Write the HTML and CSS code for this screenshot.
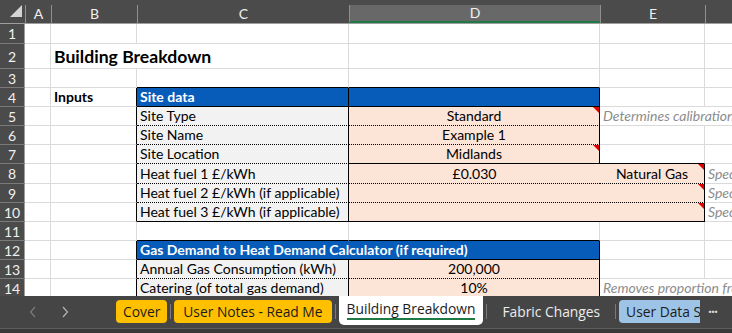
FILE: index.html
```html
<!DOCTYPE html>
<html lang="en">
<head>
    <meta charset="UTF-8">
    <meta name="viewport" content="width=device-width, initial-scale=1.0">
    <title>Building Breakdown</title>
    <link rel="stylesheet" href="styles.css">
</head>
<body>

    <div class="colhead">
        <div class="corner">
            <svg width="25" height="18" viewBox="0 0 25 18"><polygon points="22,4 22,16 10,16" fill="#d4d4d4"/></svg>
        </div>
        <div class="ch">A</div>
        <div class="ch">B</div>
        <div class="ch">C</div>
        <div class="ch sel">D</div>
        <div class="ch">E</div>
        <div class="ch"></div>
    </div>

    <div class="sheet">
        <!-- row 1 -->
        <div class="rh">1</div><div class="c"></div><div class="c"></div><div class="c"></div><div class="c"></div><div class="c"></div><div class="c"></div>
        <!-- row 2 -->
        <div class="rh">2</div><div class="c"></div><div class="c nr title">Building Breakdown</div><div class="c"></div><div class="c"></div><div class="c"></div><div class="c"></div>
        <!-- row 3 -->
        <div class="rh">3</div><div class="c"></div><div class="c"></div><div class="c bb"></div><div class="c bb"></div><div class="c"></div><div class="c"></div>
        <!-- row 4 -->
        <div class="rh">4</div><div class="c"></div><div class="c br bold">Inputs</div><div class="c hd br bb">Site data</div><div class="c hd br bb"></div><div class="c"></div><div class="c"></div>
        <!-- row 5 -->
        <div class="rh">5</div><div class="c"></div><div class="c br"></div><div class="c lbl">Site Type</div><div class="c val br note">Standard</div><div class="c nr hint">Determines calibration of the model</div><div class="c"></div>
        <!-- row 6 -->
        <div class="rh">6</div><div class="c"></div><div class="c br"></div><div class="c lbl">Site Name</div><div class="c val br">Example 1</div><div class="c"></div><div class="c"></div>
        <!-- row 7 -->
        <div class="rh">7</div><div class="c"></div><div class="c br"></div><div class="c lbl">Site Location</div><div class="c val br bb note">Midlands</div><div class="c bb"></div><div class="c"></div>
        <!-- row 8 -->
        <div class="rh">8</div><div class="c"></div><div class="c br"></div><div class="c lbl">Heat fuel 1 £/kWh</div><div class="c val nr">£0.030</div><div class="c val br note">Natural Gas</div><div class="c nr hint">Specify fuel</div>
        <!-- row 9 -->
        <div class="rh">9</div><div class="c"></div><div class="c br"></div><div class="c lbl">Heat fuel 2 £/kWh (if applicable)</div><div class="c val nr"></div><div class="c val br note"></div><div class="c nr hint">Specify fuel</div>
        <!-- row 10 -->
        <div class="rh">10</div><div class="c"></div><div class="c br"></div><div class="c lbl bb">Heat fuel 3 £/kWh (if applicable)</div><div class="c val nr bb"></div><div class="c val br bb note"></div><div class="c nr hint">Specify fuel</div>
        <!-- row 11 -->
        <div class="rh">11</div><div class="c"></div><div class="c"></div><div class="c bb"></div><div class="c bb"></div><div class="c"></div><div class="c"></div>
        <!-- row 12 -->
        <div class="rh">12</div><div class="c"></div><div class="c br"></div><div class="c hd br bb span2">Gas Demand to Heat Demand Calculator (if required)</div><div class="c"></div><div class="c"></div>
        <!-- row 13 -->
        <div class="rh">13</div><div class="c"></div><div class="c br"></div><div class="c lbl">Annual Gas Consumption (kWh)</div><div class="c val br">200,000</div><div class="c"></div><div class="c"></div>
        <!-- row 14 -->
        <div class="rh">14</div><div class="c"></div><div class="c br"></div><div class="c lbl">Catering (of total gas demand)</div><div class="c val br">10%</div><div class="c nr hint">Removes proportion from heat demand</div><div class="c"></div>
    </div>

    <div class="tabbar">
        <div class="nav">
            <svg width="8" height="12" viewBox="0 0 8 12"><polyline points="6,1 1.5,6 6,11" fill="none" stroke="#7c7c7c" stroke-width="1.2"/></svg>
            <svg width="8" height="12" viewBox="0 0 8 12"><polyline points="2,1 6.5,6 2,11" fill="none" stroke="#b4b4b4" stroke-width="1.2"/></svg>
        </div>
        <div class="tab yellow">Cover</div>
        <div class="sep"></div>
        <div class="tab yellow">User Notes - Read Me</div>
        <div class="sep"></div>
        <div class="tab active"><span>Building Breakdown</span></div>
        <div class="sep"></div>
        <div class="tab plain">Fabric Changes</div>
        <div class="sep"></div>
        <div class="tab blue">User Data Sheet</div>
        <div class="more">&middot;&middot;&middot;</div>
    </div>
    <div class="footer"></div>

</body>
</html>
```

FILE: styles.css
```css
* {
    box-sizing: border-box;
}

body {
    margin: 0;
    width: 732px;
    height: 333px;
    overflow: hidden;
    background-color: #3b3b3b;
    font-family: Lato, "Liberation Sans", sans-serif;
}

/* column letters */
.colhead {
    display: grid;
    grid-template-columns: 25px 26px 86px 212px 251px 105px 40px;
    height: 24px;
    padding-top: 5px;
    background-color: #4b4b4b;
    border-bottom: 1px solid #9e9e9e;
}

.corner svg {
    display: block;
    margin-top: -4px;
}

.ch {
    border-left: 1px solid #8f8f8f;
    color: #f0f0f0;
    font-size: 14px;
    line-height: 18px;
    text-align: center;
}

.ch.sel {
    background-color: #686868;
    border-bottom: 2px solid #1f7a45;
    line-height: 16px;
}

/* grid of cells */
.sheet {
    display: grid;
    grid-template-columns: 25px 26px 86px 212px 251px 105px 40px;
    grid-template-rows: 20px 25px 19px 19px 19px 19px 19px 20px 19px 19px 19px 19px 19px 19px;
    height: 272px;
    overflow: hidden;
    background-color: #fff;
}

.rh {
    background-color: #4b4b4b;
    color: #f0f0f0;
    font-size: 14px;
    display: flex;
    align-items: center;
    justify-content: center;
    border-right: 1px solid #9e9e9e;
    border-bottom: 1px solid #7a7a7a;
}

.c {
    position: relative;
    display: flex;
    align-items: flex-end;
    padding: 0 3px 1px;
    font-size: 14px;
    line-height: 17px;
    color: #000;
    white-space: nowrap;
    border-right: 1px solid #dadada;
    border-bottom: 1px solid #dadada;
}

.title {
    font-size: 17.6px;
    font-weight: bold;
    padding-left: 3px;
    padding-bottom: 3px;
}

.bold {
    font-weight: bold;
}

.hd {
    background-color: #075cb9;
    color: #fff;
    font-weight: bold;
}

.span2 {
    grid-column: span 2;
}

.lbl {
    background-color: #f2f2f2;
    border-right: 1px solid #000;
    border-bottom: 1px dotted #000;
}

.val {
    background-color: #fce4d6;
    justify-content: center;
    border-bottom: 1px dotted #000;
}

.hint {
    color: #8c8c8c;
    font-style: italic;
}

.note::after {
    content: "";
    position: absolute;
    top: 0;
    right: 0;
    border-top: 6px solid #e00000;
    border-left: 6px solid transparent;
}

.br {
    border-right: 1px solid #000;
}

.nr {
    border-right: none;
}

.bb {
    border-bottom: 1px solid #000;
}

.lbl.bb,
.val.bb {
    border-bottom: 1px solid #000;
}

/* sheet tabs */
.tabbar {
    display: flex;
    align-items: flex-start;
    height: 32px;
    background-color: #454545;
    font-family: "Open Sans", "Noto Sans", sans-serif;
    font-size: 13.8px;
    overflow: hidden;
}

.nav {
    display: flex;
    align-items: center;
    gap: 24px;
    width: 116px;
    height: 27px;
    padding-left: 29px;
    padding-top: 4px;
}

.tab {
    margin-top: 4px;
    height: 23px;
    padding: 0 7px;
    border-radius: 4px;
    line-height: 23px;
    white-space: nowrap;
    color: #1c1c1c;
}

.yellow {
    background-color: #ffc000;
}

.yellow + .sep + .yellow {
    padding: 0 9px;
}

.blue {
    background-color: #9dc3e6;
    width: 81px;
    overflow: hidden;
    border-radius: 4px 0 0 4px;
}

.plain {
    color: #ececec;
    padding: 0 12px;
}

.tab.active {
    margin-top: 0;
    height: 29px;
    padding: 3px 8px 0;
    background-color: #fff;
    border-radius: 0 0 5px 5px;
    line-height: 20px;
}

.active span {
    display: inline-block;
    border-bottom: 2px solid #1f7a45;
    line-height: 19px;
}

.sep {
    width: 1px;
    height: 15px;
    margin: 8px 3px 0;
    background-color: #7a7a7a;
}

.more {
    margin-left: 8px;
    margin-top: 4px;
    line-height: 23px;
    color: #d8d8d8;
    font-size: 14px;
    font-weight: bold;
    letter-spacing: -1px;
}

.footer {
    height: 5px;
    border-top: 1px solid #5c5c5c;
    background-color: #393939;
}
```
